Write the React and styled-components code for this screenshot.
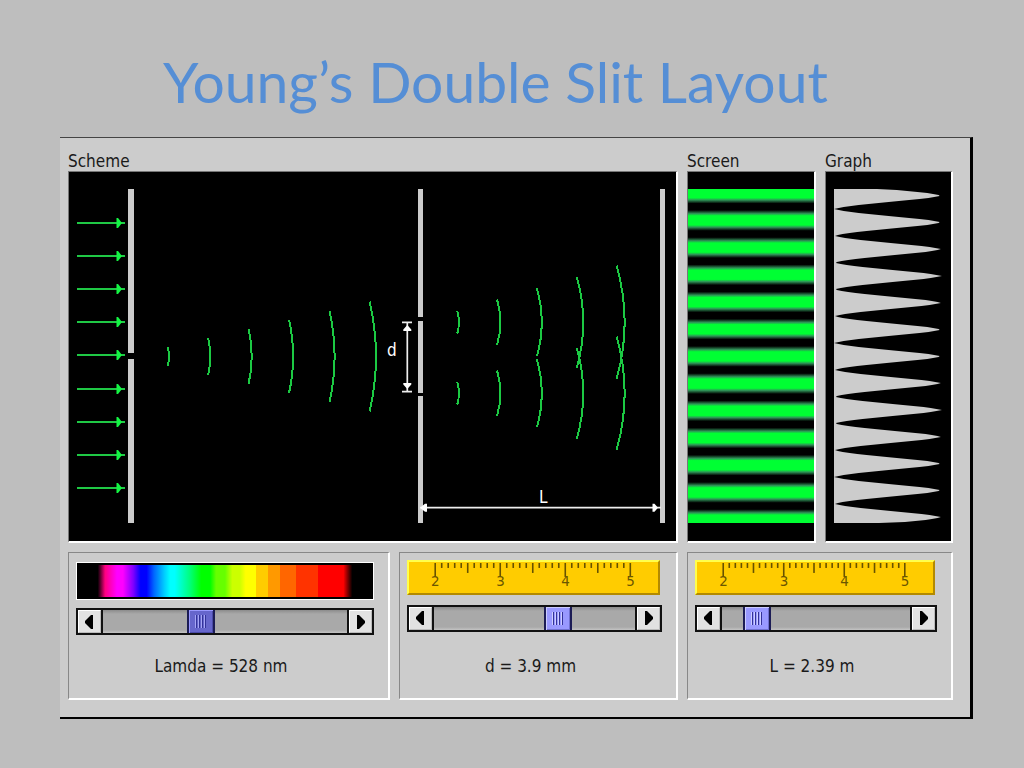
import { useState } from "react";
import styled, { createGlobalStyle } from "styled-components";

const ARC_STEP = 41.4;
const FRINGE_PERIOD = 27.2;
const GRAPH_PERIOD = 26.8;
const CENTER_Y = 184.4;

// brightness across half a fringe, from dark (0) to bright (1)
const PROFILE = [
  [0, 0],
  [0.15, 0.09],
  [0.3, 0.23],
  [0.55, 0.54],
  [0.8, 0.86],
  [1, 1],
];

function intensity(y) {
  const phase = Math.abs(y - CENTER_Y) / GRAPH_PERIOD;
  const t = 1 - 2 * Math.abs(phase - Math.round(phase));
  const index = Math.max(1, PROFILE.findIndex(([x]) => t <= x));
  const [x0, y0] = PROFILE[index - 1];
  const [x1, y1] = PROFILE[index];

  return y0 + ((t - x0) / (x1 - x0)) * (y1 - y0);
}

function getGraphPath() {
  let path = "M8 17H51";

  for (let y = 18; y <= 350; y++) {
    path += `L${(8 + 108 * intensity(y)).toFixed(1)} ${y}`;
  }

  return `${path}L53 351H8Z`;
}

function getArcPath(cx, cy, radius, degrees) {
  const angle = (degrees * Math.PI) / 180;
  const x = (cx + radius * Math.cos(angle)).toFixed(1);
  const dy = radius * Math.sin(angle);

  return `M${x} ${(cy - dy).toFixed(1)}A${radius} ${radius} 0 0 1 ${x} ${(cy + dy).toFixed(1)}`;
}

function SchemeDrawing() {
  const rays = Array.from({ length: 9 }, (_, i) => Math.round(51 + i * 33.1));
  const firstWaves = [1, 2, 3, 4, 5, 6].map((n) =>
    getArcPath(58.5, 184.5, n * ARC_STEP, 12.8)
  );
  const splitWaves = [150.3, 221.3].flatMap((cy) =>
    [1, 2, 3, 4, 5].map((n) => getArcPath(348.5, cy, n * ARC_STEP, 15.9))
  );

  return (
    <Drawing viewBox="0 0 607 369" role="img" aria-label="Double slit scheme">
      <g fill="#ccc">
        <path d="M59 17h6v164h-6zM59 187h6v164h-6z" />
        <path d="M349 17h5v128h-5zM349 149h5v72h-5zM349 224h5v127h-5z" />
        <path d="M591 17h5v334h-5z" />
      </g>
      {rays.map((y) => (
        <g key={y}>
          <path d={`M8 ${y}H56`} stroke="#1fc945" strokeWidth="1.8" />
          <path d={`M47.5 ${y - 5}h1.5l4 5l-4 5h-1.5z`} fill="#14f544" />
        </g>
      ))}
      <g
        fill="none"
        stroke="#1cc943"
        strokeWidth="2"
        shapeRendering="crispEdges"
      >
        {[...firstWaves, ...splitWaves].map((d) => (
          <path key={d} d={d} />
        ))}
      </g>
      <g stroke="#eee" strokeWidth="1.7">
        <path d="M333 150.3h10M333 219.7h10M338.3 150v70" />
        <path d="M351 335.7h241" />
      </g>
      <g fill="#fff">
        <path d="M338.3 153l4 4.5v1.5h-8v-1.5zM338.3 217l4 -4.5v-1.5h-8v1.5z" />
        <path d="M351 335.7l5 -4h2v8h-2zM589 335.7l-3.5 -4h-2v8h2z" />
      </g>
      <DrawingText x="318" y="184">
        d
      </DrawingText>
      <DrawingText x="470" y="331">
        L
      </DrawingText>
    </Drawing>
  );
}

function ScreenDrawing() {
  return (
    <Drawing viewBox="0 0 126 369" role="img" aria-label="Interference fringes">
      <defs>
        <linearGradient
          id="fringes"
          gradientUnits="userSpaceOnUse"
          spreadMethod="repeat"
          x1="0"
          x2="0"
          y1={CENTER_Y}
          y2={CENTER_Y + FRINGE_PERIOD}
        >
          <stop offset="0.17" stopColor="#00ff33" />
          <stop offset="0.25" stopColor="#2f9458" />
          <stop offset="0.38" stopColor="#000" />
          <stop offset="0.62" stopColor="#000" />
          <stop offset="0.75" stopColor="#2f9458" />
          <stop offset="0.83" stopColor="#00ff33" />
        </linearGradient>
      </defs>
      <rect y="17" width="126" height="334" fill="url(#fringes)" />
    </Drawing>
  );
}

function GraphDrawing() {
  return (
    <Drawing viewBox="0 0 125 369" role="img" aria-label="Intensity graph">
      <path d={getGraphPath()} fill="#ccc" />
    </Drawing>
  );
}

function Ruler({ width, unit }) {
  const ticks = Array.from({ length: 31 }, (_, i) => i);

  return (
    <RulerPlate>
      <Drawing viewBox={`0 0 ${width} 31`} aria-hidden="true">
        {ticks.map((i) => {
          const x = 25.5 + (i * unit) / 10;
          const length = i % 10 === 0 ? 14 : i % 5 === 0 ? 10 : 5;
          return (
            <rect key={i} x={x} y="1" width="1.6" height={length} fill="#665200" />
          );
        })}
        {[2, 3, 4, 5].map((n) => (
          <RulerText key={n} x={26.5 + (n - 2) * unit} y="24">
            {n}
          </RulerText>
        ))}
      </Drawing>
    </RulerPlate>
  );
}

function Slider({ label, value, min, max, step, dark, onChange }) {
  function moveBy(delta) {
    const next = Math.min(max, Math.max(min, value + delta));
    onChange(Number(next.toFixed(2)));
  }

  return (
    <SliderRow>
      <StepButton
        type="button"
        aria-label={`Decrease ${label}`}
        onClick={() => moveBy(-step)}
      >
        <svg width="10" height="14" viewBox="0 0 10 14">
          <path d="M8 0v14H6L0 8V6L6 0z" />
        </svg>
      </StepButton>
      <Range
        type="range"
        aria-label={label}
        min={min}
        max={max}
        step={step}
        value={value}
        $dark={dark}
        onChange={(event) => onChange(Number(event.target.value))}
      />
      <StepButton
        type="button"
        aria-label={`Increase ${label}`}
        onClick={() => moveBy(step)}
      >
        <svg width="10" height="14" viewBox="0 0 10 14">
          <path d="M1 0v14h2l6-6V6L3 0z" />
        </svg>
      </StepButton>
    </SliderRow>
  );
}

function App() {
  const [lambda, setLambda] = useState(528);
  const [slitGap, setSlitGap] = useState(3.9);
  const [distance, setDistance] = useState(2.39);

  return (
    <>
      <GlobalStyle />
      <Slide>
        <Title>Young’s Double Slit Layout</Title>
        <Applet>
          <Plots>
            <Plot>
              <PlotLabel>Scheme</PlotLabel>
              <PlotFrame>
                <SchemeDrawing />
              </PlotFrame>
            </Plot>
            <Plot>
              <PlotLabel>Screen</PlotLabel>
              <PlotFrame>
                <ScreenDrawing />
              </PlotFrame>
            </Plot>
            <Plot>
              <PlotLabel>Graph</PlotLabel>
              <PlotFrame>
                <GraphDrawing />
              </PlotFrame>
            </Plot>
          </Plots>
          <Controls>
            <Panel>
              <Spectrum />
              <Slider
                label="Lamda"
                min={380}
                max={760}
                step={1}
                value={lambda}
                dark
                onChange={setLambda}
              />
              <Reading>Lamda = {lambda} nm</Reading>
            </Panel>
            <Panel>
              <Ruler width={250} unit={65.3} />
              <Slider
                label="d"
                min={2}
                max={5}
                step={0.1}
                value={slitGap}
                onChange={setSlitGap}
              />
              <Reading>d = {slitGap} mm</Reading>
            </Panel>
            <Panel>
              <Ruler width={237} unit={60.8} />
              <Slider
                label="L"
                min={2}
                max={5}
                step={0.01}
                value={distance}
                onChange={setDistance}
              />
              <Reading>L = {distance} m</Reading>
            </Panel>
          </Controls>
        </Applet>
      </Slide>
    </>
  );
}

const GlobalStyle = createGlobalStyle`
  * {
    box-sizing: border-box;
  }

  body {
    margin: 0;
    background-color: #bebebe;
    color: #1a1a1a;
    font-family: "DejaVu Sans Condensed", "DejaVu Sans", sans-serif;
    font-size: 17px;
  }
`;

const Slide = styled.main`
  min-height: 100vh;
  padding: 41px 51px 49px 60px;
`;

const Title = styled.h1`
  margin: 0 0 16px;
  padding-right: 42px;
  color: #558ed5;
  font-family: Lato, sans-serif;
  font-size: 57px;
  font-weight: 400;
  line-height: 80px;
  text-align: center;
`;

const Applet = styled.section`
  padding: 14px 17px 17px 8px;
  border-top: 1px solid #444;
  border-right: 3px solid #000;
  border-bottom: 2px solid #000;
  background-color: #ccc;
`;

const Plots = styled.div`
  display: grid;
  grid-template-columns: 610fr 129fr 128fr;
  gap: 9px;
`;

const Plot = styled.figure`
  display: flex;
  flex-direction: column;
  margin: 0;
`;

const PlotLabel = styled.figcaption`
  line-height: 19px;
`;

const PlotFrame = styled.div`
  flex: 1;
  border: solid;
  border-width: 1px 2px 2px 1px;
  border-color: #777 #fff #fff #777;
  background-color: #000;
`;

const Drawing = styled.svg`
  display: block;
  width: 100%;
  height: auto;
`;

const DrawingText = styled.text`
  fill: #fff;
  font-size: 17px;
`;

const Controls = styled.div`
  display: grid;
  grid-template-columns: 322fr 279fr 266fr;
  gap: 9px;
  margin-top: 9px;
`;

const Panel = styled.div`
  display: flex;
  flex-direction: column;
  min-height: 148px;
  padding: 7px 14px 20px 7px;
  border: solid;
  border-width: 1px 2px 2px 1px;
  border-color: #888 #fff #fff #888;
`;

const Spectrum = styled.div`
  height: 38px;
  margin: 2px 0 8px;
  border: 1px solid #fff;
  background-color: #000;
  background-image: linear-gradient(
    90deg,
    #000 7%,
    #ff0080 9.5%,
    #f0f 13.5% 15.5%,
    #8000ff 19%,
    #00f 21.5% 23.5%,
    #0066ff 26%,
    #0cf 29.5%,
    #0ff 31.5% 33%,
    #00ff80 38%,
    #0f0 42% 45%,
    #66ff00 47% 50%,
    #cf0 52.5% 55%,
    #ff0 57% 60.5%,
    #fc0 60.5% 64.5%,
    #f90 64.5% 68.5%,
    #f60 68.5% 74%,
    #f30 74% 81.5%,
    #f00 81.5% 90%,
    #000 93%
  );
  background-repeat: no-repeat;
  background-position: center;
  background-size: 100% 32px;
`;

const RulerPlate = styled.div`
  margin: 0 2px 10px 0;
  border: 2px solid;
  border-color: #ffff4d #b38a00 #b38a00 #ffff4d;
  background-color: #fc0;
`;

const RulerText = styled.text`
  fill: #6b5600;
  font-size: 15px;
  text-anchor: middle;
`;

const SliderRow = styled.div`
  display: flex;
  height: 27px;
  border: 2px solid #111;
`;

const StepButton = styled.button`
  display: flex;
  align-items: center;
  justify-content: center;
  flex: 0 0 23px;
  padding: 0;
  border: 1px solid;
  border-color: #fff #bbb #bbb #fff;
  background-color: #e2e2e2;
  color: #000;
`;

const Range = styled.input`
  flex: 1;
  min-width: 0;
  height: 23px;
  margin: 0;
  border: solid #111;
  border-width: 0 2px;
  appearance: none;
  background: linear-gradient(#8c8c8c, #a9a9a9 4px, #a9a9a9 20px, #c4c4c4);

  &::-webkit-slider-thumb {
    width: 28px;
    height: 23px;
    border: solid #1c1c55;
    border-width: 0 2px;
    appearance: none;
    background:
      repeating-linear-gradient(
          90deg,
          ${({ $dark }) => ($dark ? "#a5a5f5" : "#ccccff")} 0 1px,
          #333399 1px 2px,
          ${({ $dark }) => ($dark ? "#6666cc" : "#9999ff")} 2px 3px
        )
        center / 12px 13px no-repeat,
      ${({ $dark }) => ($dark ? "#6666cc" : "#9999ff")};
    box-shadow:
      inset 1px 1px ${({ $dark }) => ($dark ? "#9999ff" : "#ccccff")},
      inset -1px -1px ${({ $dark }) => ($dark ? "#4a4aa8" : "#7070d0")};
  }
`;

const Reading = styled.output`
  margin-top: auto;
  padding-right: 8px;
  line-height: 24px;
  text-align: center;
`;

export default App;
